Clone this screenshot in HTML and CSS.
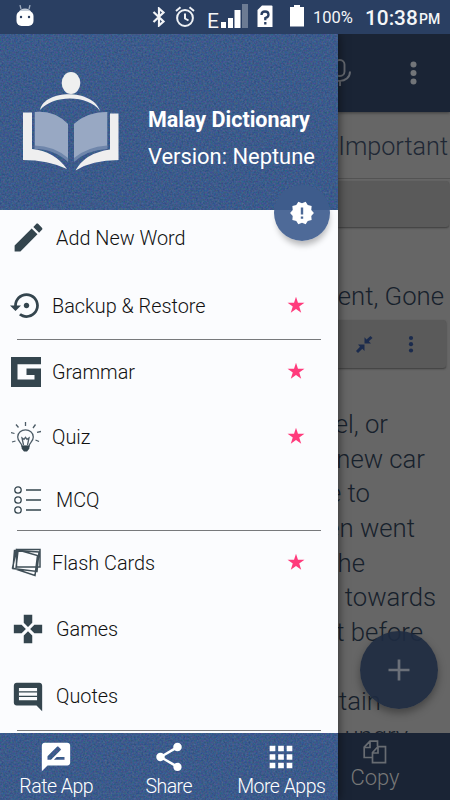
FILE: index.html
```html
<!DOCTYPE html>
<html lang="en">
<head>
<meta charset="utf-8">
<title>Malay Dictionary</title>
<link rel="stylesheet" href="styles.css">
</head>
<body>
<header class="status">
  <svg class="droid" width="20" height="22" viewBox="0 0 20 22"><path d="M5 0l1 4M15 0l-1 4" stroke="#9eabbe" stroke-width="1.3"/><path d="M4 7Q5 3.5 10 3.5T16 7z" fill="#c3ccd8"/><rect x="1.5" y="6" width="17" height="15" rx="5" fill="#fff"/><circle cx="6" cy="12" r="1.2" fill="#2a3f62"/><circle cx="14" cy="12" r="1.2" fill="#2a3f62"/></svg>
  <svg class="bt" width="14" height="20" viewBox="0 0 14 20"><path d="M1.500 5l10 9.500L7 18.500v-17l4.500 4L1.500 15" fill="none" stroke="#f2f4f7" stroke-width="2.200"/></svg>
  <svg class="alarm" width="20" height="22" viewBox="0 0 20 22"><circle cx="10" cy="12" r="7.900" fill="none" stroke="#eef1f5" stroke-width="2"/><path d="M10 7.500v5l3.500 2M1 5l4.500-3.700M19 5l-4.500-3.700" fill="none" stroke="#eef1f5" stroke-width="2"/></svg>
  <span class="edge">E</span>
  <svg class="signal" width="27" height="24" viewBox="0 0 27 24"><path d="M0 18h5v6H0zM7 14h5v10H7zM13.500 6h6v18h-6z" fill="#fff"/><path d="M21 0h6v24h-6z" fill="#6c7b93"/></svg>
  <svg class="sim" width="16" height="23" viewBox="0 0 16 23"><path d="M5 .5h9.500q1 0 1 1V22H.5V5z" fill="#fff"/><path d="M4.500 10Q4.500 6.500 8 6.500t3.500 3.200Q11.500 12 8.300 13v2.200M8.300 17v2.500" fill="none" stroke="#2a3f62" stroke-width="2.300"/></svg>
  <svg class="battery" width="14" height="22" viewBox="0 0 14 22"><path d="M4 0h6v2h4v19.500H0V2h4z" fill="#fff"/></svg>
  <span class="percent">100%</span>
  <span class="clock">10:38</span><span class="ampm">PM</span>
</header>
<div class="screen">
  <aside class="drawer">
    <section class="hero">
      <svg class="noise"><filter id="grain" x="0" y="0" width="100%" height="100%" color-interpolation-filters="sRGB"><feTurbulence type="fractalNoise" baseFrequency=".55" numOctaves="2" seed="4"/><feColorMatrix values=".26 0 0 0 .105  0 .2 0 0 .255  0 0 .2 0 .445  0 0 0 0 1"/></filter><rect width="100%" height="100%" filter="url(#grain)"/></svg>
      <svg class="logo" width="97" height="100" viewBox="0 0 97 100">
        <ellipse cx="48" cy="11" rx="9.300" ry="11" fill="#efefef"/>
        <path d="M17 38C22 17 70 17 77 39C66 23 31 22 17 38z" fill="#efefef"/>
        <path d="M0 40.500h9v36.500Q31 79 44 97Q25 88 0 88zM95.500 41.500h-8.500V77.500Q62 81 52.500 98.500Q69 88 95.500 88z" fill="#efefef"/>
        <path d="M11.500 40Q31 38 45 52V90Q31 77 11.500 77zM84.500 40Q64 40 51 52V90Q64 78 84.500 77z" fill="#6f86ab"/>
        <path d="M12 40Q31 38 45 52V86Q31 74 12 73.500zM84 40Q64 40 51 52V86Q64 75 84 73.500z" fill="#98a8c3"/>
      </svg>
      <div class="titles"><div class="app">Malay Dictionary</div><div class="version">Version: Neptune</div></div>
      <div class="badge"><svg width="26" height="26" viewBox="0 0 24 24"><path fill="#fff" d="M23 12l-2.440-2.780.34-3.680-3.610-.82-1.890-3.180L12 3 8.600 1.540 6.710 4.720l-3.610.81.34 3.680L1 12l2.440 2.780-.34 3.690 3.610.82 1.890 3.180L12 21l3.400 1.460 1.890-3.180 3.610-.82-.34-3.680L23 12z"/><path d="M10.900 7h2.200v6.300h-2.200zM10.900 15.200h2.200v2.200h-2.200z" fill="#4c6896"/></svg></div>
    </section>
    <nav class="menu">
      <div class="item add"><svg class="i37" viewBox="0 0 24 24"><path d="M3 17.250V21h3.750L17.810 9.940l-3.750-3.750L3 17.250zM20.710 7.040c.39-.39.39-1.020 0-1.410l-2.340-2.340c-.39-.39-1.020-.39-1.410 0l-1.830 1.830 3.750 3.750 1.830-1.830z"/></svg><span>Add New Word</span></div>
      <div class="item tight backup"><svg class="i33" viewBox="0 0 24 24"><path d="M14 12c0-1.100-.9-2-2-2s-2 .9-2 2 .9 2 2 2 2-.9 2-2zm-2-9c-4.970 0-9 4.030-9 9H0l4 4 4-4H5c0-3.870 3.130-7 7-7s7 3.130 7 7-3.130 7-7 7c-1.510 0-2.910-.49-4.060-1.300l-1.420 1.440C8.040 20.300 9.940 21 12 21c4.970 0 9-4.030 9-9s-4.030-9-9-9z"/></svg><span>Backup &amp; Restore</span><i class="star"></i></div>
      <hr>
      <div class="item tight grammar"><svg class="i30" viewBox="0 0 30 30"><path d="M0 0h30v7.300H6.500v15.200h17V18h-8v-6.500H30V30H0z"/></svg><span>Grammar</span><i class="star"></i></div>
      <div class="item tight quiz"><svg class="i30" viewBox="0 0 30 30"><g fill="none" stroke="#4c5b66" stroke-width="1.300"><path d="M11 24.500c0-4-4.300-4.500-4.300-9.500 0-9.500 15.600-9.500 15.600 0 0 5-4.300 5.500-4.300 9.500zM12.500 23l-1.500-7 2 1.300 1.500-2 1.500 2 2-1.300-1.500 7M14.500 0v4M5 2.500l2.500 3M24.500 2.500L22 6M0 10.500l3.500 1M30 9.500l-4 .8M1 20l3.500-1M28 19.500l-3.500-1.500"/></g><path d="M10.700 23.500h7.600v3.200L16 29.500h-3l-2.300-2.800z"/></svg><span>Quiz</span><i class="star"></i></div>
      <div class="item mcq"><svg class="i30" viewBox="0 0 30 30"><g fill="none" stroke="#34454e" stroke-width="1.300"><circle cx="7" cy="5" r="3.200"/><circle cx="7" cy="15" r="3.200"/><circle cx="7" cy="25" r="3.200"/><path d="M15 5h15M15 15h15M15 25h15"/></g></svg><span>MCQ</span></div>
      <hr>
      <div class="item tight cards"><svg class="i30" viewBox="0 0 30 30"><g fill="none" stroke="#3f4e57" stroke-width="1.500"><path d="M5.500 1.500h23.500v17.500H5.500zM5.500 1.500l21 6-2.500 20L1.500 20zM3.500 2.500l-1.500 18 24 3L28 4zM7 3L5 20"/></g></svg><span>Flash Cards</span><i class="star"></i></div>
      <div class="item games"><svg class="i34" viewBox="0 0 24 24"><path d="M15 7.500V2H9v5.500l3 3 3-3zM7.500 9H2v6h5.500l3-3-3-3zM9 16.500V22h6v-5.500l-3-3-3 3zM16.500 9l-3 3 3 3H22V9h-5.500z"/></svg><span>Games</span></div>
      <div class="item quotes"><svg class="i34" viewBox="0 0 24 24"><path fill-rule="evenodd" d="M22 4c0-1.100-.9-2-2-2H4c-1.100 0-2 .9-2 2v12c0 1.100.9 2 2 2h14l4 4zM5.600 5.700h12.800v8.600H5.600z"/><path d="M5.600 8h12.800v.8H5.600zM5.600 11.200h12.800v.8H5.600z"/></svg><span>Quotes</span></div>
      <hr>
    </nav>
    <footer class="actions">
      <svg class="noise"><rect width="100%" height="100%" filter="url(#grain)"/></svg>
      <div class="action"><svg viewBox="0 0 24 24"><path d="M20 2H4c-1.100 0-2 .9-2 2v18l4-4h14c1.100 0 2-.9 2-2V4c0-1.100-.9-2-2-2zM6 14v-2.470l6.880-6.880c.2-.2.510-.2.710 0l1.770 1.770c.2.2.2.510 0 .710L8.470 14H6zm12 0h-7.500l2-2H18v2z"/></svg><span>Rate App</span></div>
      <div class="action"><svg viewBox="0 0 24 24"><path d="M18 16.080c-.76 0-1.440.3-1.960.77L8.910 12.700c.05-.23.09-.46.09-.7s-.04-.47-.09-.7l7.050-4.110c.54.5 1.250.81 2.040.81 1.660 0 3-1.340 3-3s-1.340-3-3-3-3 1.340-3 3c0 .24.04.47.09.7L8.040 9.810C7.500 9.310 6.790 9 6 9c-1.660 0-3 1.340-3 3s1.340 3 3 3c.79 0 1.500-.31 2.040-.81l7.120 4.160c-.05.21-.08.43-.08.65 0 1.610 1.310 2.920 2.920 2.920s2.920-1.310 2.920-2.920-1.310-2.920-2.920-2.920z"/></svg><span>Share</span></div>
      <div class="action"><svg viewBox="0 0 24 24"><path d="M4 8h4V4H4v4zm6 12h4v-4h-4v4zm-6 0h4v-4H4v4zm0-6h4v-4H4v4zm6 0h4v-4h-4v4zm6-10v4h4V4h-4zm-6 4h4V4h-4v4zm6 6h4v-4h-4v4zm0 6h4v-4h-4v4z"/></svg><span>More Apps</span></div>
    </footer>
  </aside>
  <main class="page">
    <div class="toolbar">
      <svg width="112" height="78" viewBox="0 0 112 78"><g fill="none" stroke="#656970" stroke-width="1.900"><rect x="-3" y="26" width="9.500" height="16" rx="4.500"/><path d="M-8 37.500C-8 50 12 50 12 37.500M2 47v5"/></g><g fill="#727579"><circle cx="75.500" cy="30.500" r="3"/><circle cx="75.500" cy="39" r="3"/><circle cx="75.500" cy="47.500" r="3"/></g></svg>
    </div>
    <div class="tab">Important</div>
    <div class="box first"></div>
    <div class="word">ent, Gone</div>
    <div class="box second">
      <svg width="70" height="20" viewBox="0 0 70 20"><g fill="#1b2b4d"><path d="M9.500 10.500v6.500l-2.200-2.200L3 19l-2-2 4-4.300L3 10.500zM9.500 9.500H16l-2.200-2.200L17.500 4l-2-2-4 3.500L9.500 3.300z"/><circle cx="56" cy="4" r="2.100"/><circle cx="56" cy="10.200" r="2.100"/><circle cx="56" cy="16.500" r="2.100"/></g></svg>
    </div>
    <div class="story">
      <p class="l1">el, or</p><p class="l2">new car</p><p class="l3">e to</p><p class="l4">en went</p><p class="l5">he</p><p class="l6">towards</p><p class="l7">t before</p><p class="l8">&nbsp;</p><p class="l9">rtain</p><p class="l10">ungry</p>
    </div>
    <div class="fab"><svg width="22" height="22" viewBox="0 0 22 22"><path d="M11 .5v21M.5 11h21" stroke="#6b7079" stroke-width="2.700"/></svg></div>
    <div class="copybar"><svg width="24" height="24" viewBox="0 0 24 24"><path d="M9.500 17.500H1.200V7.200L7 1.200h7.500v5M7 1.500v6H1.500M9.500 12.500l5.500-5.800h7.500v16H9.500zM15 7v6H9.500" fill="none" stroke="#686c72" stroke-width="1.700"/></svg><span>Copy</span></div>
  </main>
</div>
</body>
</html>
```
FILE: styles.css
```css
* { box-sizing: border-box; }
body { margin: 0; width: 450px; height: 800px; overflow: hidden; font-family: Roboto, "Liberation Sans", sans-serif; font-weight: 300; }
svg { display: block; flex: none; }
.status { height: 34px; background: #2a3f62; display: flex; align-items: flex-start; color: #f4f6f8; font-weight: 400; white-space: nowrap; }
.droid { margin: 5px 0 0 15px; }
.bt { margin: 7px 0 0 117px; }
.alarm { margin: 6px 0 0 9px; }
.edge { width: 12px; margin: 9px 0 0 12px; font-size: 21px; line-height: 24px; }
.signal { margin: 4px 0 0 2px; }
.sim { margin: 5px 0 0 9px; }
.battery { margin: 5px 0 0 17px; }
.percent { width: 53px; margin: 6px 0 0 9px; font-size: 16.500px; line-height: 24px; }
.clock { width: 52px; margin: 4px 0 0 -1px; font-size: 20.800px; line-height: 28px; font-weight: 500; }
.ampm { margin: 9px 0 0 2px; font-size: 14px; line-height: 21px; font-weight: 500; }
.screen { display: flex; height: 766px; }
.drawer { width: 338px; height: 766px; display: flex; flex-direction: column; background: #fbfcfe; position: relative; z-index: 2; box-shadow: 1px 0 9px rgba(0,0,0,.5); clip-path: inset(0 -20px 0 0); }
.hero { position: relative; height: 176px; display: flex; color: #fff; background: #3c5c8f; }
.noise { position: absolute; left: 0; top: 0; width: 100%; height: 100%; }
.logo { position: relative; margin: 38px 0 0 23px; }
.titles { position: relative; margin: 71px 0 0 28px; white-space: nowrap; }
.app { font-size: 21.500px; line-height: 30px; font-weight: 700; }
.version { font-size: 21.900px; line-height: 30px; margin-top: 7px; font-weight: 400; }
.badge { position: absolute; left: 274px; top: 151px; width: 56px; height: 56px; border-radius: 50%; background: linear-gradient(#3e5c8c 25px, #4e6a98 25px); display: grid; place-items: center; box-shadow: 1px 6px 6px -2px rgba(0,0,0,.28); }
.menu { flex: 1; display: flex; flex-direction: column; }
.item { display: flex; align-items: center; padding-left: 11px; color: #111; font-size: 19.850px; }
.item svg { fill: #34454e; }
.item span { width: 221px; margin-left: 11px; white-space: nowrap; }
.item.tight span { width: 235px; margin-left: 11px; }
.i37 { width: 37px; height: 37px; }
.i34 { width: 34px; height: 34px; }
.i33 { width: 33px; height: 33px; }
.i30 { width: 30px; height: 30px; }
.add { height: 56px; padding-left: 10px; }
.add .i37 { margin-top: -2px; }
.item.add span { margin: 1px 0 0 9px; }
.backup { height: 66px; margin-top: 7px; padding-left: 10px; }
.item.backup svg { margin-top: -1px; }
.item.backup span { width: 235px; margin-left: 9px; }
.grammar { height: 64px; }
.quiz { height: 66px; }
.mcq { height: 60px; }
.item.mcq span { margin-left: 15px; }
.cards { height: 64px; }
.games { height: 68px; }
.quotes { height: 67px; }
hr { width: 304px; height: 1px; border: 0; margin: 0 0 0 17px; background: #77797b; }
.star { width: 18px; height: 18px; margin-top: -2px; background: #ff3b7c; clip-path: polygon(50% 4%,61% 37%,97% 37%,68% 58%,79% 93%,50% 72%,21% 93%,32% 58%,3% 37%,39% 37%); }
.actions { height: 67px; position: relative; display: flex; background: #3c5c8f; }
.action { position: relative; width: 112.500px; flex: none; padding-top: 7px; display: flex; flex-direction: column; align-items: center; color: #fff; font-size: 19.500px; letter-spacing: -.5px; line-height: 26px; white-space: nowrap; }
.action svg { width: 34px; height: 34px; fill: #fff; }
.page { width: 112px; height: 766px; position: relative; overflow: hidden; background: #666; color: #17212c; font-size: 25.700px; }
.toolbar { height: 78px; background: #1a2435; box-shadow: 0 1px 3px rgba(0,0,0,.4); }
.tab { height: 67px; line-height: 70px; border-bottom: 1px solid #535353; display: flex; justify-content: flex-end; padding-right: 2px; color: #202835; font-size: 25.200px; }
.box { background: #5a5a5a; border-radius: 0 3px 3px 0; box-shadow: 0 1px 2px #3b3b3b; }
.first { height: 46px; margin: 2px 1px 0 0; }
.word { height: 92px; line-height: 34px; padding: 52px 6px 0 0; display: flex; justify-content: flex-end; white-space: nowrap; }
.second { height: 48px; margin: 1px 4px 0 0; padding: 14px 0 0 17px; }
.story { margin-top: 39px; line-height: 34.650px; }
.story p { margin: 0; display: flex; justify-content: flex-end; white-space: nowrap; }
.story .l1 { padding-right: 62px; }
.story .l2 { padding-right: 25px; }
.story .l3 { padding-right: 80px; }
.story .l4 { padding-right: 35px; }
.story .l5 { padding-right: 85px; }
.story .l6 { padding-right: 14px; }
.story .l7 { padding-right: 27px; }
.story .l9 { padding-right: 69px; }
.story .l10 { padding-right: 42px; }
.fab { position: absolute; left: 22px; top: 597px; width: 78px; height: 78px; border-radius: 50%; background: rgba(30,43,65,.91); box-shadow: 0 4px 8px rgba(0,0,0,.35); display: grid; place-items: center; }
.copybar { position: absolute; left: 0; bottom: 0; width: 112px; height: 67px; padding: 7px 38px 0 0; background: #1a2435; color: #777; font-size: 22px; line-height: 28px; display: flex; flex-direction: column; align-items: center; }
```
